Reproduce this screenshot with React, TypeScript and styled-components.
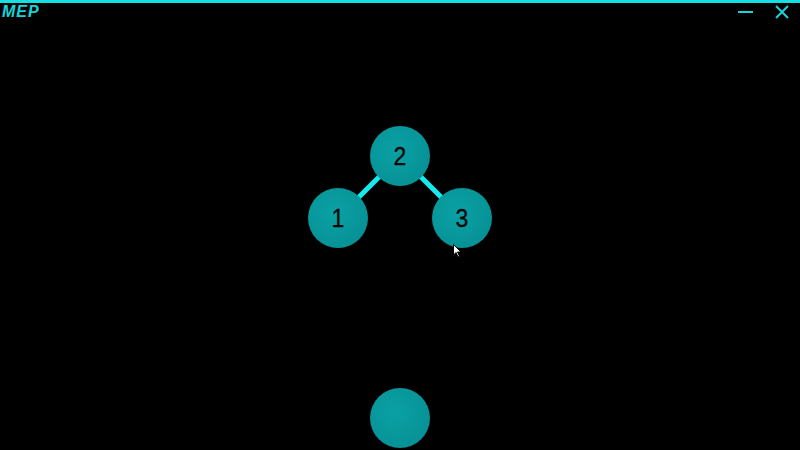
import React from "react";
import styled, { createGlobalStyle } from "styled-components";

const Global = createGlobalStyle`
  html, body { margin: 0; padding: 0; background: #000; }
  body { width: 800px; height: 450px; overflow: hidden; font-family: "Liberation Sans", Arial, sans-serif; }
`;

const Window = styled.div`
  width: 800px;
  height: 450px;
  background: #000;
  border-top: 3px solid #14e0e4;
  box-sizing: border-box;
  display: flex;
  flex-direction: column;
  overflow: hidden;
`;

const TitleBar = styled.div`
  height: 18px;
  display: flex;
  align-items: center;
  justify-content: space-between;
  padding: 0 10px 0 2px;
`;

const Title = styled.div`
  color: #16d4da;
  font-family: "Liberation Sans", Arial, sans-serif;
  font-weight: bold;
  font-style: italic;
  font-size: 16px;
  letter-spacing: 1px;
  line-height: 16px;
`;

const Controls = styled.div`
  display: flex;
  align-items: center;
  gap: 20px;
`;

const CtrlButton = styled.div`
  width: 16px;
  height: 16px;
  display: flex;
  align-items: center;
  justify-content: center;
`;

const Canvas = styled.div`
  position: relative;
  flex: 1;
`;

const Edges = styled.svg`
  position: absolute;
  left: 0;
  top: 0;
  width: 800px;
  height: 429px;
`;

const Node = styled.div<{ $x: number; $y: number }>`
  position: absolute;
  left: ${(p) => p.$x - 30}px;
  top: ${(p) => p.$y - 30}px;
  width: 60px;
  height: 60px;
  border-radius: 50%;
  background: radial-gradient(circle at 42% 40%, #0aa0a4 0%, #08989c 45%, #048a8e 100%);
  display: flex;
  align-items: center;
  justify-content: center;
  color: #040808;
  font-family: "Liberation Sans", Arial, sans-serif;
  font-size: 25px;
`;

const Label = styled.span`
  display: inline-block;
  transform: scaleX(0.92) scaleY(1.04);
  -webkit-text-stroke: 0.3px #040808;
`;

const Cursor = styled.svg`
  position: absolute;
  left: 453px;
  top: 223px;
  width: 10px;
  height: 14px;
`;

const OFFSET = 21; // canvas top in page coords

const nodes = [
  { id: "2", x: 400, y: 156 },
  { id: "1", x: 338, y: 218 },
  { id: "3", x: 462, y: 218 },
  { id: "", x: 400, y: 418 },
];

const edges: [number, number][] = [
  [0, 1],
  [0, 2],
];

export default function App() {
  return (
    <>
      <Global />
      <Window>
        <TitleBar>
          <Title>MEP</Title>
          <Controls>
            <CtrlButton>
              <svg width="16" height="16" viewBox="0 0 16 16">
                <line x1="0" y1="8" x2="15" y2="8" stroke="#16d4da" strokeWidth="2" />
              </svg>
            </CtrlButton>
            <CtrlButton>
              <svg width="16" height="16" viewBox="0 0 16 16">
                <path d="M2 2 L14 14 M14 2 L2 14" stroke="#16d4da" strokeWidth="2" />
              </svg>
            </CtrlButton>
          </Controls>
        </TitleBar>
        <Canvas>
          <Edges viewBox="0 0 800 429">
            {edges.map(([a, b], i) => (
              <line
                key={i}
                x1={nodes[a].x}
                y1={nodes[a].y - OFFSET}
                x2={nodes[b].x}
                y2={nodes[b].y - OFFSET}
                stroke="#12ecef"
                strokeWidth="5"
              />
            ))}
          </Edges>
          {nodes.map((n, i) => (
            <Node key={i} $x={n.x} $y={n.y - OFFSET}>
              {n.id && <Label>{n.id}</Label>}
            </Node>
          ))}
          <Cursor viewBox="0 0 10 14">
            <path d="M0.5 0.5 L0.5 11 L3 8.5 L5 13 L6.5 12.3 L4.6 8 L8 8 Z" fill="#fff" stroke="#000" strokeWidth="1" />
          </Cursor>
        </Canvas>
      </Window>
    </>
  );
}
